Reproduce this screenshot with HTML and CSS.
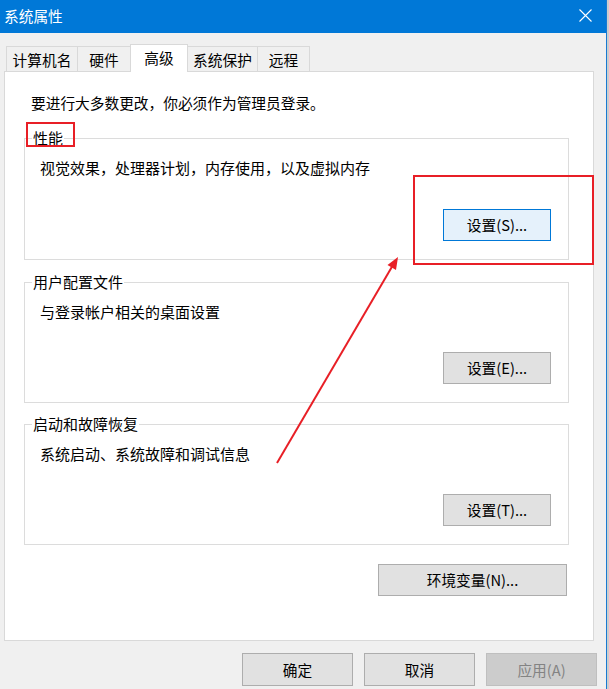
FILE: index.html
```html
<!DOCTYPE html>
<html lang="zh-CN">
<head>
<meta charset="utf-8">
<title>系统属性</title>
<link rel="stylesheet" href="styles.css">
</head>
<body>
<div class="screen">
  <div class="dialog">
    <div class="titlebar">
      <span class="title">系统属性</span>
      <svg class="close" width="13" height="13" viewBox="0 0 13 13"><path d="M0.5 0.5 L12.5 12.5 M12.5 0.5 L0.5 12.5" stroke="#fff" stroke-width="1.1" fill="none"/></svg>
    </div>
    <div class="tabs">
      <div class="tab t1">计算机名</div>
      <div class="tab t2">硬件</div>
      <div class="tab t3 active">高级</div>
      <div class="tab t4">系统保护</div>
      <div class="tab t5">远程</div>
    </div>
    <div class="panel">
      <p class="note">要进行大多数更改，你必须作为管理员登录。</p>
      <div class="group g1">
        <span class="legend">性能</span>
        <p class="desc">视觉效果，处理器计划，内存使用，以及虚拟内存</p>
        <button class="btn set focused">设置(S)...</button>
      </div>
      <div class="group g2">
        <span class="legend">用户配置文件</span>
        <p class="desc">与登录帐户相关的桌面设置</p>
        <button class="btn set">设置(E)...</button>
      </div>
      <div class="group g3">
        <span class="legend">启动和故障恢复</span>
        <p class="desc">系统启动、系统故障和调试信息</p>
        <button class="btn set">设置(T)...</button>
      </div>
      <div class="env-row">
        <button class="btn env">环境变量(N)...</button>
      </div>
    </div>
    <div class="footer">
      <button class="btn foot">确定</button>
      <button class="btn foot">取消</button>
      <button class="btn foot disabled">应用(A)</button>
    </div>
  </div>
  <div class="edge"></div>
  <svg class="annot" width="609" height="689" viewBox="0 0 609 689">
    <rect x="27" y="123" width="47" height="23" fill="none" stroke="#e81f26" stroke-width="2"/>
    <rect x="414" y="176" width="179" height="88" fill="none" stroke="#e81f26" stroke-width="2"/>
    <line x1="277" y1="463" x2="393" y2="265" stroke="#e81f26" stroke-width="2"/>
    <polygon points="398,257 396,270 387.5,265" fill="#e81f26"/>
  </svg>
</div>
</body>
</html>
```
FILE: styles.css
```css
html, body {
  margin: 0;
  padding: 0;
}
body {
  background: #f0f0f0;
  font-family: "Noto Sans CJK SC", "Microsoft YaHei", sans-serif;
  color: #000;
}
.screen {
  position: relative;
  width: 609px;
  height: 689px;
  display: flex;
  overflow: hidden;
}
.dialog {
  width: 606px;
  height: 689px;
  background: #f0f0f0;
  display: flex;
  flex-direction: column;
}
.edge {
  flex: 1;
  border-left: 1px solid #1979d2;
  background: #cdcdcd;
}
.titlebar {
  height: 33px;
  background: #0078d7;
  display: flex;
  align-items: center;
  justify-content: space-between;
  padding-left: 4px;
  flex-shrink: 0;
}
.title {
  color: #fff;
  font-size: 14.7px;
  line-height: 18px;
  margin-top: -1px;
}
.close {
  margin-right: 14px;
  margin-top: -2px;
}
.tabs {
  display: flex;
  align-items: flex-end;
  margin-top: 11px;
  padding-left: 6px;
  flex-shrink: 0;
}
.tab {
  box-sizing: border-box;
  height: 25px;
  border: 1px solid #d9d9d9;
  border-bottom: 0;
  margin-left: -1px;
  display: flex;
  align-items: center;
  justify-content: center;
  font-size: 14.7px;
  line-height: 18px;
  padding-top: 1px;
  background: #f0f0f0;
}
.tab.t1 { margin-left: 0; width: 72px; }
.tab.t2 { width: 54px; }
.tab.t3 { width: 58px; }
.tab.t4 { width: 71px; }
.tab.t5 { width: 53px; }
.tab.active {
  height: 28px;
  background: #fff;
  margin-bottom: -1px;
  position: relative;
  z-index: 1;
  padding-top: 0;
  padding-bottom: 1px;
}
.panel {
  box-sizing: border-box;
  margin-left: 4px;
  width: 590px;
  height: 570px;
  border: 1px solid #d9d9d9;
  background: #fff;
  padding: 22px 0 0 19px;
  flex-shrink: 0;
}
.note {
  margin: 0 0 0 7px;
  font-size: 14.7px;
  line-height: 18px;
}
.group {
  position: relative;
  box-sizing: border-box;
  width: 545px;
  border: 1px solid #dcdcdc;
  padding: 20px 17px 18px 15px;
  display: flex;
  flex-direction: column;
  align-items: flex-start;
}
.g1 { margin-top: 26px; height: 122px; }
.g2 { margin-top: 22px; height: 121px; }
.g3 { margin-top: 21px; height: 121px; }
.legend {
  position: absolute;
  top: -10px;
  left: 7px;
  padding: 0 1px;
  background: #fff;
  font-size: 15px;
  line-height: 18px;
}
.desc {
  margin: 0;
  font-size: 15px;
  line-height: 18px;
}
.btn {
  box-sizing: border-box;
  height: 32px;
  padding: 0;
  margin: 0;
  background: #e1e1e1;
  border: 1px solid #adadad;
  border-radius: 0;
  font-family: "Noto Sans CJK SC", "Microsoft YaHei", sans-serif;
  font-size: 14.7px;
  line-height: 18px;
  color: #000;
}
.btn.set {
  margin-top: auto;
  align-self: flex-end;
  width: 108px;
}
.btn.focused {
  background: #e5f1fb;
  border-color: #0078d7;
}
.env-row {
  width: 545px;
  display: flex;
  justify-content: flex-end;
  padding-right: 2px;
  box-sizing: border-box;
  margin-top: 19px;
}
.btn.env {
  width: 189px;
}
.footer {
  display: flex;
  justify-content: flex-end;
  gap: 11px;
  padding-right: 9px;
  margin-top: 12px;
}
.btn.foot {
  width: 111px;
  height: 33px;
}
.btn.disabled {
  background: #cccccc;
  border-color: #bfbfbf;
  color: #838383;
}
.annot {
  position: absolute;
  left: 0;
  top: 0;
  pointer-events: none;
  z-index: 5;
}
```
